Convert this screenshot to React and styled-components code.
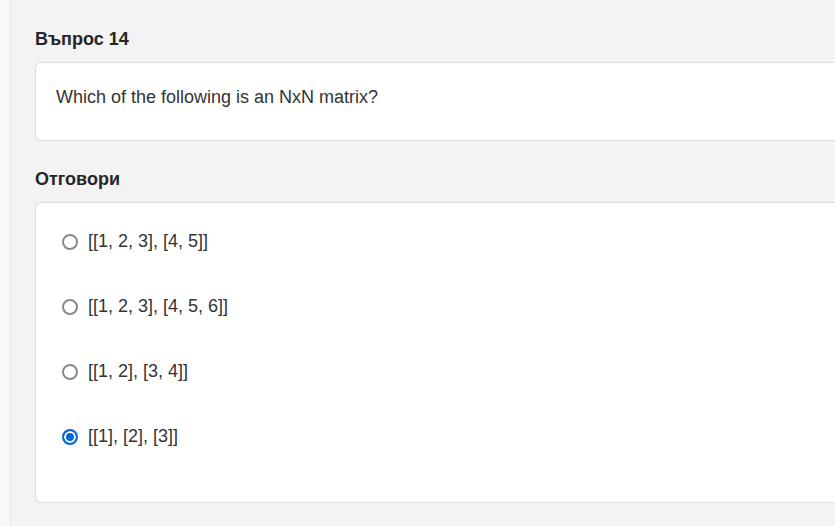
import React, { useState } from 'react';
import styled, { createGlobalStyle } from 'styled-components';

const Global = createGlobalStyle`
  html, body { margin: 0; padding: 0; }
  body {
    background: #f3f3f3;
    font-family: "Liberation Sans", Arial, sans-serif;
    color: #333;
    overflow: hidden;
  }
`

const Page = styled.div`
  display: flex;
  min-height: 526px;
`

const Rail = styled.div`
  width: 10px;
  flex: none;
  background: #f8f8f8;
  border-right: 1px solid #e4e4e4;
`

const Main = styled.main`
  flex: 1;
  padding: 29px 0 0 24px;
  min-width: 0;
`

const Heading = styled.h2`
  margin: ${p => p.$first ? '0' : '28px'} 0 13px 0;
  font-size: 18px;
  line-height: 20px;
  font-weight: bold;
  color: #262626;
`

const Card = styled.section`
  background: #fff;
  border: 1px solid #dedede;
  border-right: none;
  border-radius: 6px 0 0 6px;
  margin-right: -10px;
  padding: ${p => p.$pad};
`

const Question = styled.p`
  margin: 0;
  font-size: 18px;
  line-height: 26px;
  color: #333;
`

const Option = styled.label`
  display: flex;
  align-items: center;
  gap: 10px;
  height: 65px;
  font-size: 18px;
  color: #333;
  cursor: pointer;
`

const Radio = styled.span`
  width: 16px;
  height: 16px;
  box-sizing: border-box;
  border-radius: 50%;
  flex: none;
  border: 2px solid ${p => p.$on ? '#0b66d6' : '#8a8a8a'};
  background: ${p => p.$on ? '#0b66d6' : '#fff'};
  box-shadow: ${p => p.$on ? 'inset 0 0 0 2px #fff' : 'none'};
`

const answers = [
  '[[1, 2, 3], [4, 5]]',
  '[[1, 2, 3], [4, 5, 6]]',
  '[[1, 2], [3, 4]]',
  '[[1], [2], [3]]',
]

export default function App() {
  const [picked, setPicked] = useState(3)

  return (
    <Page>
      <Global />
      <Rail />
      <Main>
        <Heading $first>Въпрос 14</Heading>
        <Card $pad="21px 20px 30px">
          <Question>Which of the following is an NxN matrix?</Question>
        </Card>
        <Heading>Отговори</Heading>
        <Card $pad="6px 20px 33px 26px">
          {answers.map((a, i) => (
            <Option key={i} onClick={() => setPicked(i)}>
              <Radio $on={picked === i} />
              {a}
            </Option>
          ))}
        </Card>
      </Main>
    </Page>
  )
}
